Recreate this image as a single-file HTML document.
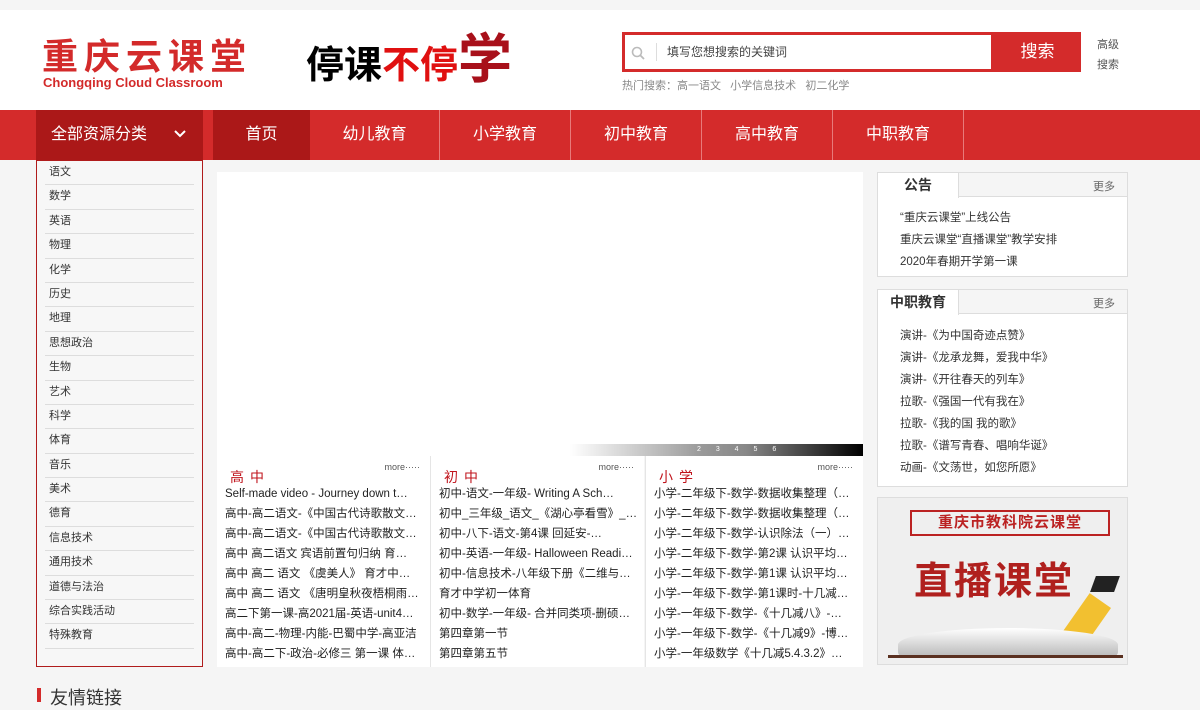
<!DOCTYPE html>
<html><head><meta charset="utf-8"><style>
*{margin:0;padding:0;box-sizing:border-box}
body{width:1200px;height:700px;overflow:hidden;background:#f5f5f5;font-family:"Liberation Sans","Noto Sans CJK SC",sans-serif;color:#333;position:relative}
.a{position:absolute}
#hdr{left:0;top:10px;width:1200px;height:100px;background:#fff}
#nav{left:0;top:110px;width:1200px;height:50px;background:#d42b2b}
.ni{position:absolute;top:0;height:50px;line-height:50px;color:#fff;font-size:16px;text-align:center;border-right:1px solid #e87a7a}
.side{left:36px;top:160px;width:167px;height:507px;border:1px solid #b01c1c;background:#f7f7f7}
.side div{margin:0 8px;height:24.4px;line-height:22px;border-bottom:1px solid #ddd;font-size:11px;padding-left:4px;color:#333}
.col{position:absolute;top:456px;height:211px;width:213px;background:#fff}
.col h4{font-weight:normal;color:#c0141c;font-size:14px;letter-spacing:6px;position:absolute;left:13px;top:11px}
.col .m{position:absolute;right:10px;top:6px;font-size:9px;color:#555}
.col ul{list-style:none;position:absolute;left:8px;top:28px;width:200px}
.col li{height:20px;line-height:20px;font-size:11.5px;white-space:nowrap;overflow:hidden;color:#222}
.box{left:877px;width:251px;background:#fff;border:1px solid #ddd}
.box .th{height:24px;background:#f5f5f5;border-bottom:1px solid #ddd;position:relative}
.box .tab{position:absolute;left:0;top:0;width:81px;height:25px;background:#fff;border-right:1px solid #ddd;text-align:center;line-height:24px;font-size:14px;font-weight:bold;color:#333}
.box .more{position:absolute;right:12px;top:5px;font-size:11px;color:#666}
.box ul{list-style:none;padding:9px 0 0 22px}
.box li{font-size:11.5px;height:22px;line-height:22px;color:#333}
</style></head><body>
<div class="a" id="hdr">
 <div class="a" style="left:42px;top:28px;color:#d32a2a;font-size:36px;font-weight:bold;letter-spacing:6px;line-height:38px">重庆云课堂</div>
 <div class="a" style="left:43px;top:65px;color:#d32a2a;font-size:13px;font-weight:bold;line-height:16px">Chongqing Cloud Classroom</div>
 <div class="a" style="left:306px;top:26px;font-size:38px;font-weight:bold;line-height:48px"><span style="color:#000">停课</span><span style="color:#e01010">不停</span><span style="color:#a8101a;font-size:54px">学</span></div>
 <div class="a" style="left:622px;top:22px;width:372px;height:40px;border:3px solid #d42b2b;background:#fff">
  <svg class="a" style="left:6px;top:11px" width="14" height="14" viewBox="0 0 14 14"><circle cx="6" cy="6" r="4.5" fill="none" stroke="#bbb" stroke-width="1.6"/><path d="M9.5 9.5L13 13" stroke="#bbb" stroke-width="1.8"/></svg>
  <div class="a" style="left:31px;top:8px;width:1px;height:18px;background:#ddd"></div>
  <div class="a" style="left:42px;top:8px;font-size:12px;color:#444">填写您想搜索的关键词</div>
 </div>
 <div class="a" style="left:994px;top:22px;width:87px;height:40px;background:#d42b2b;color:#fff;font-size:17px;text-align:center;line-height:40px">搜索</div>
 <div class="a" style="left:1097px;top:25px;font-size:11px;color:#555;line-height:20px">高级<br>搜索</div>
 <div class="a" style="left:622px;top:67px;font-size:11px;color:#888">热门搜索：高一语文&nbsp;&nbsp;&nbsp;小学信息技术&nbsp;&nbsp;&nbsp;初二化学</div>
</div>
<div class="a" id="nav">
 <div class="ni" style="left:36px;width:167px;background:#ab1818;border:none;text-align:left;padding-left:15px">全部资源分类 <svg style="position:absolute;left:138px;top:19px" width="12" height="10" viewBox="0 0 12 10"><path d="M1 2L6 7L11 2" fill="none" stroke="#fff" stroke-width="2"/></svg></div>
 <div class="ni" style="left:213px;width:97px;background:#ab1818;border:none">首页</div>
 <div class="ni" style="left:310px;width:130px">幼儿教育</div>
 <div class="ni" style="left:440px;width:131px">小学教育</div>
 <div class="ni" style="left:571px;width:131px">初中教育</div>
 <div class="ni" style="left:702px;width:131px">高中教育</div>
 <div class="ni" style="left:833px;width:131px">中职教育</div>
</div>
<div class="a side">
<div>语文</div><div>数学</div><div>英语</div><div>物理</div><div>化学</div><div>历史</div><div>地理</div><div>思想政治</div><div>生物</div><div>艺术</div><div>科学</div><div>体育</div><div>音乐</div><div>美术</div><div>德育</div><div>信息技术</div><div>通用技术</div><div>道德与法治</div><div>综合实践活动</div><div>特殊教育</div>
</div>
<div class="a" style="left:217px;top:172px;width:646px;height:284px;background:#fff"></div>
<div class="a" style="left:570px;top:444px;width:293px;height:12px;background:linear-gradient(to right,#fff,#999 45%,#888 60%,#000)"></div>
<div class="a" style="left:697px;top:444px;font-size:7px;color:#fff;line-height:12px;word-spacing:13px">2 3 4 5 6</div>
<div class="col" style="left:217px"><h4>高中</h4><span class="m">more·····</span><ul>
<li>Self-made video - Journey down t…</li><li>高中-高二语文-《中国古代诗歌散文…</li><li>高中-高二语文-《中国古代诗歌散文…</li><li>高中 高二语文 宾语前置句归纳 育…</li><li>高中 高二 语文 《虞美人》 育才中…</li><li>高中 高二 语文 《唐明皇秋夜梧桐雨…</li><li>高二下第一课-高2021届-英语-unit4…</li><li>高中-高二-物理-内能-巴蜀中学-高亚洁</li><li>高中-高二下-政治-必修三 第一课 体…</li></ul></div>
<div class="col" style="left:431px"><h4>初中</h4><span class="m">more·····</span><ul>
<li>初中-语文-一年级- Writing A Sch…</li><li>初中_三年级_语文_《湖心亭看雪》_…</li><li>初中-八下-语文-第4课 回延安-…</li><li>初中-英语-一年级- Halloween Readi…</li><li>初中-信息技术-八年级下册《二维与…</li><li>育才中学初一体育</li><li>初中-数学-一年级- 合并同类项-删硕…</li><li>第四章第一节</li><li>第四章第五节</li></ul></div>
<div class="col" style="left:646px;width:217px"><h4>小学</h4><span class="m">more·····</span><ul>
<li>小学-二年级下-数学-数据收集整理（…</li><li>小学-二年级下-数学-数据收集整理（…</li><li>小学-二年级下-数学-认识除法（一）…</li><li>小学-二年级下-数学-第2课 认识平均…</li><li>小学-二年级下-数学-第1课 认识平均…</li><li>小学-一年级下-数学-第1课时-十几减…</li><li>小学-一年级下-数学-《十几减八》-…</li><li>小学-一年级下-数学-《十几减9》-博…</li><li>小学-一年级数学《十几减5.4.3.2》…</li></ul></div>
<div class="a" style="left:430px;top:456px;width:1px;height:211px;background:#e5e5e5"></div>
<div class="a" style="left:645px;top:456px;width:1px;height:211px;background:#e5e5e5"></div>
<div class="a box" style="top:172px;height:105px"><div class="th"><div class="tab">公告</div><span class="more">更多</span></div><ul style="padding-top:10px"><li>“重庆云课堂”上线公告</li><li>重庆云课堂“直播课堂”教学安排</li><li>2020年春期开学第一课</li></ul></div>
<div class="a box" style="top:289px;height:198px"><div class="th"><div class="tab">中职教育</div><span class="more">更多</span></div><ul style="padding-top:11px"><li>演讲-《为中国奇迹点赞》</li><li>演讲-《龙承龙舞，爱我中华》</li><li>演讲-《开往春天的列车》</li><li>拉歌-《强国一代有我在》</li><li>拉歌-《我的国 我的歌》</li><li>拉歌-《谱写青春、唱响华诞》</li><li>动画-《文荡世，如您所愿》</li></ul></div>
<div class="a" style="left:877px;top:497px;width:251px;height:168px;background:#efefef;border:1px solid #ddd">
 <div class="a" style="left:32px;top:12px;width:200px;height:26px;border:2px solid #b22;text-align:center;line-height:22px;font-size:15px;font-weight:bold;color:#b22;letter-spacing:1px">重庆市教科院云课堂</div>
 <div class="a" style="left:36px;top:62px;font-size:38px;font-weight:bold;color:#b0201e;letter-spacing:2px;line-height:44px">直播课堂</div>
 <div class="a" style="left:215px;top:78px;width:24px;height:16px;background:#222;transform:skewX(-20deg)"></div>
 <div class="a" style="left:195px;top:98px;width:26px;height:50px;background:#f2c030;transform:rotate(35deg)"></div>
 <div class="a" style="left:20px;top:130px;width:220px;height:28px;background:linear-gradient(#fff,#bbb);border-radius:50% 50% 4px 4px/60% 60% 4px 4px"></div>
 <div class="a" style="left:10px;top:157px;width:235px;height:3px;background:#5a3020"></div>
</div>
<div class="a" style="left:37px;top:688px;width:4px;height:14px;background:#d42b2b"></div>
<div class="a" style="left:50px;top:684px;font-size:18px;color:#333">友情链接</div>
</body></html>
